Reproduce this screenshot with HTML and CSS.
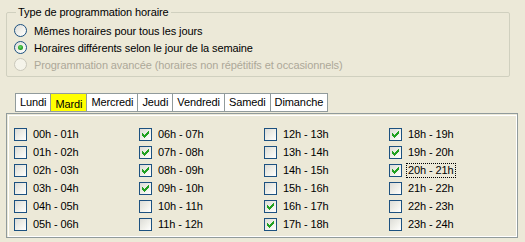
FILE: index.html
```html
<!DOCTYPE html>
<html lang="fr">
<head>
<meta charset="utf-8">
<link rel="stylesheet" href="styles.css">
</head>
<body>
<fieldset class="group">
  <legend class="group-title">Type de programmation horaire</legend>
  <div class="radio-row"><span class="radio"></span><span>Mêmes horaires pour tous les jours</span></div>
  <div class="radio-row"><span class="radio checked"></span><span>Horaires différents selon le jour de la semaine</span></div>
  <div class="radio-row disabled"><span class="radio"></span><span>Programmation avancée (horaires non répétitifs et occasionnels)</span></div>
</fieldset>

<div class="tabs">
  <span class="tab">Lundi</span>
  <span class="tab tab-mardi">Mardi</span>
  <span class="tab">Mercredi</span>
  <span class="tab">Jeudi</span>
  <span class="tab">Vendredi</span>
  <span class="tab">Samedi</span>
  <span class="tab">Dimanche</span>
</div>

<div class="panel">
  <div class="grid" id="grid"></div>
</div>

<script>
  var checked = [6,7,8,9,16,17,18,19,20];
  var grid = document.getElementById('grid');
  var check = '<svg width="13" height="13" viewBox="0 0 13 13" shape-rendering="crispEdges"><polygon fill="#21A121" points="3,5 4,5 4,6 5,6 5,7 6,7 6,6 7,6 7,5 8,5 8,4 9,4 9,3 10,3 10,6 9,6 9,7 8,7 8,8 7,8 7,9 6,9 6,10 5,10 5,9 4,9 4,8 3,8"/></svg>';
  function pad(n){ return (n < 10 ? '0' : '') + n; }
  for (var h = 0; h < 24; h++) {
    var item = document.createElement('div');
    item.className = 'item';
    var box = '<span class="box">' + (checked.indexOf(h) >= 0 ? check : '') + '</span>';
    var lbl = '<span class="lbl' + (h === 20 ? ' focus' : '') + '">' + pad(h) + 'h - ' + pad(h + 1) + 'h</span>';
    item.innerHTML = box + lbl;
    grid.appendChild(item);
  }
</script>
</body>
</html>
```

FILE: styles.css
```css
html, body {
  margin: 0;
  padding: 0;
  background: #ECE9D8;
}
body {
  padding: 6px 7px 0 6px;
  font-family: "Liberation Sans", Arial, sans-serif;
  font-size: 11px;
  letter-spacing: -0.1px;
  color: #000;
  width: 512px;
}

.group {
  margin: 0;
  padding: 3px 0 3px 7px;
  border: 1px solid #D0D0BF;
  border-radius: 2px;
  width: 504px;
  box-sizing: border-box;
  min-inline-size: 0;
}
.group-title {
  margin-left: 2px;
  padding: 0 2px;
  line-height: 13px;
  height: 13px;
}
.radio-row {
  display: flex;
  align-items: center;
  height: 17px;
  gap: 7px;
}
.radio-row.disabled {
  color: #ACA899;
}
.radio {
  width: 13px;
  height: 13px;
  box-sizing: border-box;
  border: 1px solid #1C5180;
  border-radius: 50%;
  background: linear-gradient(135deg, #DCDCD7 0%, #F4F4F0 60%, #FFFFFF 100%);
  display: flex;
  align-items: center;
  justify-content: center;
}
.radio.checked::after {
  content: "";
  width: 5px;
  height: 5px;
  border-radius: 50%;
  background: radial-gradient(circle at 45% 40%, #6CD86C 0%, #21A121 60%, #1A8A1A 100%);
}
.disabled .radio {
  border-color: #CAC8BB;
  background: #F5F4EA;
}

.tabs {
  display: flex;
  margin: 16px 0 0 9px;
  height: 20px;
}
.tab {
  display: flex;
  align-items: center;
  height: 19px;
  box-sizing: border-box;
  padding: 0 4px 1px 4px;
  background: #FFFFFF;
  border: 1px solid #919B9C;
  margin-right: -1px;
}
.tab-mardi {
  background: #FFFF00;
  padding-top: 3px;
  padding-bottom: 0;
}

.panel {
  border: 1px solid #919B9C;
  box-shadow: inset 1px 1px 0 #ECE9D8, inset 2px 2px 0 #FFFFFF, inset -1px -1px 0 #FFFFFF;
  width: 512px;
  box-sizing: border-box;
  padding: 14px 0 1px 7px;
}
.grid {
  display: grid;
  grid-template-columns: repeat(4, 125px);
  grid-template-rows: repeat(6, 18px);
  grid-auto-flow: column;
}
.item {
  display: flex;
  align-items: flex-start;
  gap: 4px;
}
.box {
  width: 13px;
  height: 13px;
  box-sizing: border-box;
  border: 1px solid #1C5180;
  background: linear-gradient(135deg, #DCDCD7 0%, #F0F0EA 55%, #FFFFFF 100%);
  position: relative;
  flex: none;
}
.box svg {
  position: absolute;
  left: -1px;
  top: -1px;
}
.lbl {
  height: 13px;
  line-height: 13px;
  padding: 0 1px;
  border: 1px solid transparent;
  box-sizing: content-box;
  margin-top: -1px;
}
.lbl.focus {
  border: 1px dotted #000;
}
```
